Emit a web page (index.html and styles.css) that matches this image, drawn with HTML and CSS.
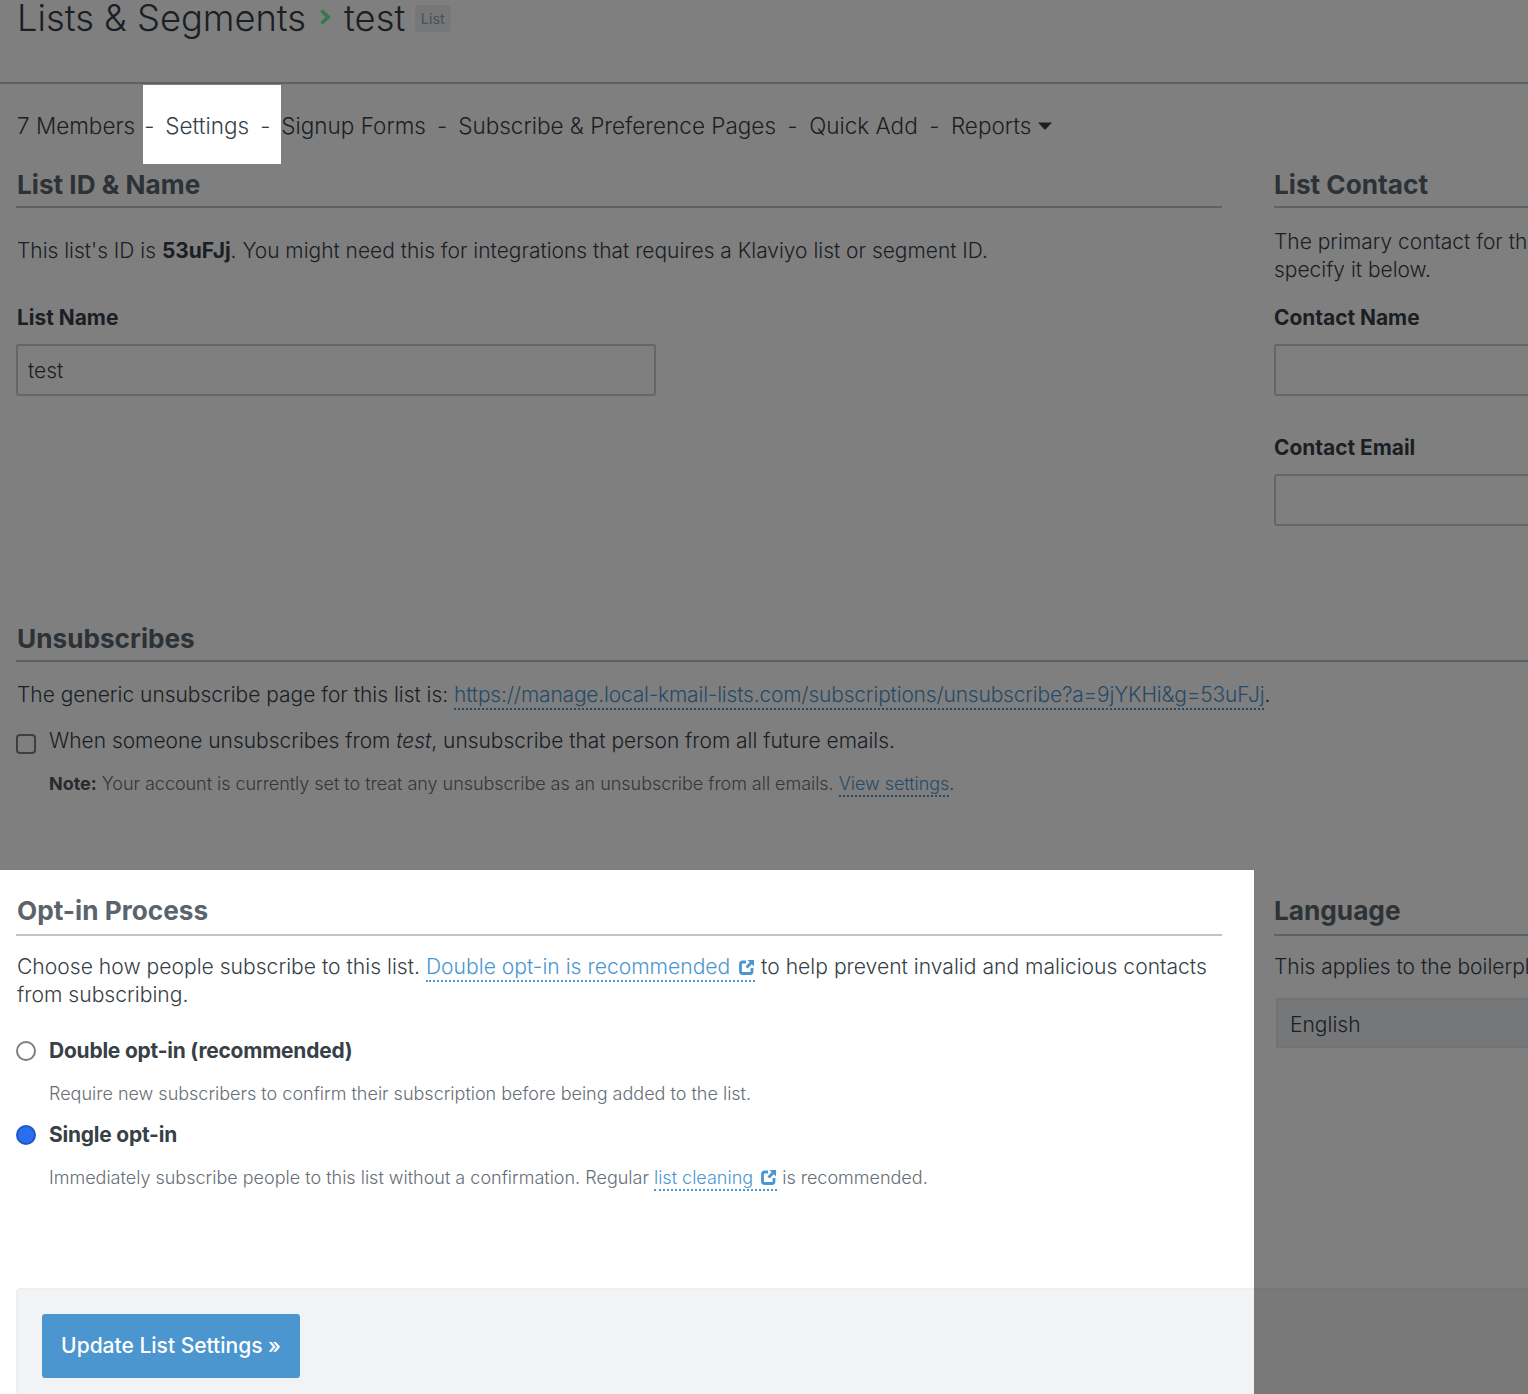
FILE: index.html
```html
<!DOCTYPE html>
<html lang="en">
<head>
<meta charset="utf-8">
<title>List Settings</title>
<link rel="stylesheet" href="styles.css">
</head>
<body>
<header class="page-head">
  <h1 class="crumbs">Lists &amp; Segments
    <svg class="crumb-arrow" width="13" height="18" viewBox="0 0 13 18"><path d="M2.5 2.5 L9 9 L2.5 15.5" fill="none" stroke="#6cf0a0" stroke-width="3.8"/></svg>
    test <span class="tag">List</span></h1>
</header>
<nav class="tabs">
  <a class="tab">7 Members</a><span class="sep">-</span><a class="tab">Settings</a><span class="sep">-</span><a class="tab">Signup Forms</a><span class="sep">-</span><a class="tab">Subscribe &amp; Preference Pages</a><span class="sep">-</span><a class="tab">Quick Add</a><span class="sep">-</span><a class="tab">Reports</a>
  <svg class="caret" width="14" height="8" viewBox="0 0 14 8"><path d="M0 0.5 H14 L7 8 Z" fill="#373f47"/></svg>
</nav>
<div class="columns first-row">
  <section class="main-col">
    <h2 class="section-title">List ID &amp; Name</h2>
    <p class="copy id-line">This list's ID is <b>53uFJj</b>. You might need this for integrations that requires a Klaviyo list or segment ID.</p>
    <label class="field-label id-label">List Name</label>
    <input class="text-input name-input" value="test">
  </section>
  <section>
    <h2 class="section-title">List Contact</h2>
    <p class="copy nowrap">The primary contact for this list is used in emails. You can<br>specify it below.</p>
    <label class="field-label">Contact Name</label>
    <input class="text-input wide-input">
    <label class="field-label second-label">Contact Email</label>
    <input class="text-input wide-input">
  </section>
</div>
<section class="unsub main-col">
  <h2 class="section-title">Unsubscribes</h2>
  <p class="copy unsub-line">The generic unsubscribe page for this list is: <a class="link url-link">https://manage.local-kmail-lists.com/subscriptions/unsubscribe?a=9jYKHi&amp;g=53uFJj</a>.</p>
  <div class="check-row">
    <input type="checkbox" class="check">
    <span class="copy">When someone unsubscribes from <i>test</i>, unsubscribe that person from all future emails.</span>
  </div>
  <p class="small indented note"><b>Note:</b> Your account is currently set to treat any unsubscribe as an unsubscribe from all emails. <a class="link">View settings</a>.</p>
</section>
<div class="columns second-row">
  <section class="main-col">
    <h2 class="section-title">Opt-in Process</h2>
    <p class="copy optin-intro">Choose how people subscribe to this list. <a class="link">Double opt-in is recommended <svg class="ext" width="16" height="16" viewBox="0 0 16 16"><use href="#ext-icon"/></svg></a> to help prevent invalid and malicious contacts from subscribing.</p>
    <div class="radio-row first-radio">
      <input type="radio" class="radio" name="optin">
      <b class="copy">Double opt-in (recommended)</b>
    </div>
    <p class="small indented radio-help">Require new subscribers to confirm their subscription before being added to the list.</p>
    <div class="radio-row">
      <input type="radio" class="radio" name="optin" checked>
      <b class="copy">Single opt-in</b>
    </div>
    <p class="small indented radio-help">Immediately subscribe people to this list without a confirmation. Regular <a class="link">list cleaning <svg class="ext" width="16" height="16" viewBox="0 0 16 16"><use href="#ext-icon"/></svg></a> is recommended.</p>
  </section>
  <section>
    <h2 class="section-title">Language</h2>
    <p class="copy nowrap">This applies to the boilerplate text in your emails and forms.</p>
    <div class="select">English</div>
  </section>
</div>
<footer class="actions">
  <button class="primary">Update List Settings »</button>
</footer>
<div class="scrim"></div>
<svg width="0" height="0" class="defs">
  <symbol id="ext-icon" viewBox="0 0 16 16">
    <path d="M7 3 H3.5 A2 2 0 0 0 1.5 5 V12.5 A2 2 0 0 0 3.5 14.5 H11 A2 2 0 0 0 13 12.5 V9" fill="none" stroke="#4b96d0" stroke-width="2.8"/>
    <path d="M8.5 1 H15 V7.5 L12.8 5.3 L8.6 9.5 L6.5 7.4 L10.7 3.2 Z" fill="#4b96d0"/>
  </symbol>
</svg>
</body>
</html>
```
FILE: styles.css
```css
* { box-sizing: border-box; }
html, body { margin: 0; }
body {
  position: relative;
  width: 1528px;
  height: 1394px;
  overflow: hidden;
  background: #fff;
  color: #373f47;
  font-family: "Inter", "Liberation Sans", sans-serif;
  font-size: 22px;
  line-height: 28px;
}
.page-head {
  height: 84px;
  padding: 0 17px;
  border-bottom: 2px solid #bfc4c9;
}
.crumbs {
  margin: 0;
  display: flex;
  align-items: center;
  gap: 12.5px;
  height: 36px;
  font-size: 36.3px;
  font-weight: 300;
  line-height: 36px;
  color: #373f47;
}
.crumb-arrow { flex: none; margin-top: -2px; }
.tag {
  padding: 0 6px;
  height: 27px;
  margin-left: -3px;
  border-radius: 4px;
  background: #eceef0;
  color: #9aa1a8;
  font-size: 14.5px;
  font-weight: 400;
  line-height: 27px;
}
.tabs {
  display: flex;
  align-items: center;
  height: 80px;
  padding: 4px 0 0 17px;
  font-size: 22.5px;
  font-weight: 300;
  color: #373f47;
}
.tab:first-child { margin-right: -2px; }
.sep { margin: 0 11px; }
.sep:nth-last-of-type(-n+2) { margin: 0 11.5px; }
.caret { margin-left: 7px; }
.columns {
  display: grid;
  grid-template-columns: 1206px 400px;
  gap: 52px;
  padding-left: 16px;
}
.first-row { height: 454px; margin-top: 6px; }
.second-row { height: 418px; padding-top: 28px; }
.section-title {
  margin: 0;
  height: 38px;
  border-bottom: 2px solid #bfc4c9;
  color: #5b646c;
  font-size: 26.2px;
  font-weight: 700;
  line-height: 30px;
}
.second-row .section-title { line-height: 26px; }
.main-col .section-title { padding-left: 1px; }
.copy { margin: 0; font-size: 20.95px; line-height: 28px; font-weight: 300; }
p.copy { margin-top: 20px; }
.second-row p.copy { margin-top: 17px; }
.second-row p.optin-intro { font-size: 21.1px; }
.main-col p.copy { padding-left: 1px; }
b.copy { font-weight: 700; letter-spacing: -0.2px; }
.copy b { font-weight: 700; }
.nowrap { white-space: nowrap; }
.id-line { padding-top: 9px; }
.field-label {
  display: block;
  margin: 20px 0 12px 0;
  font-weight: 700;
  font-size: 20.9px;
  line-height: 28px;
}
.main-col .field-label { padding-left: 1px; }
.id-label { margin-top: 39px; }
.second-label { margin-top: 38px; }
.text-input {
  display: block;
  height: 52px;
  padding: 0 10px;
  border: 2px solid #c9cdd1;
  border-radius: 3px;
  background: #fff;
  color: #373f47;
  font: inherit;
  font-size: 21px;
  font-weight: 300;
}
.name-input { width: 640px; }
.wide-input { width: 400px; }
.unsub { height: 246px; padding-left: 16px; }
.link {
  color: #4b96d0;
  border-bottom: 2px dotted #4b96d0;
  padding-bottom: 1px;
}
.url-link { letter-spacing: -0.17px; }
.unsub-line { white-space: nowrap; }
.unsub p.unsub-line { margin-top: 19px; }
.check-row, .radio-row { display: flex; align-items: center; gap: 13px; }
.check-row { margin-top: 18px; }
.check, .radio {
  appearance: none;
  flex: none;
  width: 20px;
  height: 20px;
  margin: 6px 0 0;
  border: 2px solid #7a7f85;
  background: #fff;
}
.check { border-radius: 4px; }
.radio { border-radius: 50%; margin-top: 0; }
.radio:checked { background: #2a6ef0; border-color: #1f58c4; }
.small { margin: 0; font-size: 18px; line-height: 28px; color: #666e76; font-weight: 300; }
.small b { color: #4c555d; font-weight: 700; }
.indented { margin-left: 33px; }
.note { margin-top: 15px; letter-spacing: -0.035px; }
.first-radio { margin-top: 28px; }
.radio-row b { color: #373f47; }
.radio-help { margin-top: 15px; margin-bottom: 13px; }
.ext { display: inline-block; vertical-align: -1px; margin-left: 3px; }
.select {
  margin-top: 17px;
  margin-left: 2px;
  width: 400px;
  height: 50px;
  padding: 2px 12px 0;
  border: 2px solid #e2e4e7;
  background: #eceef1;
  font-size: 21px;
  font-weight: 300;
  line-height: 46px;
}
.actions {
  margin-left: 16px;
  height: 110px;
  padding: 24px 24px;
  border: 2px solid #eceef0;
  border-bottom: 0;
  border-right: 0;
  border-top-left-radius: 4px;
  background: #f2f3f5;
}
.primary {
  display: block;
  width: 258px;
  height: 64px;
  padding: 0;
  border: 0;
  border-radius: 3px;
  background: #4c96d0;
  color: #fff;
  font: inherit;
  font-size: 21px;
  font-weight: 500;
}
.scrim {
  position: absolute;
  inset: 0;
  background: rgba(0, 0, 0, .5);
  clip-path: polygon(evenodd,
    0 0, 1528px 0, 1528px 1394px, 0 1394px, 0 0,
    143px 85px, 281px 85px, 281px 164px, 143px 164px, 143px 85px, 0 0,
    0 870px, 1254px 870px, 1254px 1394px, 0 1394px, 0 870px);
}
.defs { position: absolute; }
```
